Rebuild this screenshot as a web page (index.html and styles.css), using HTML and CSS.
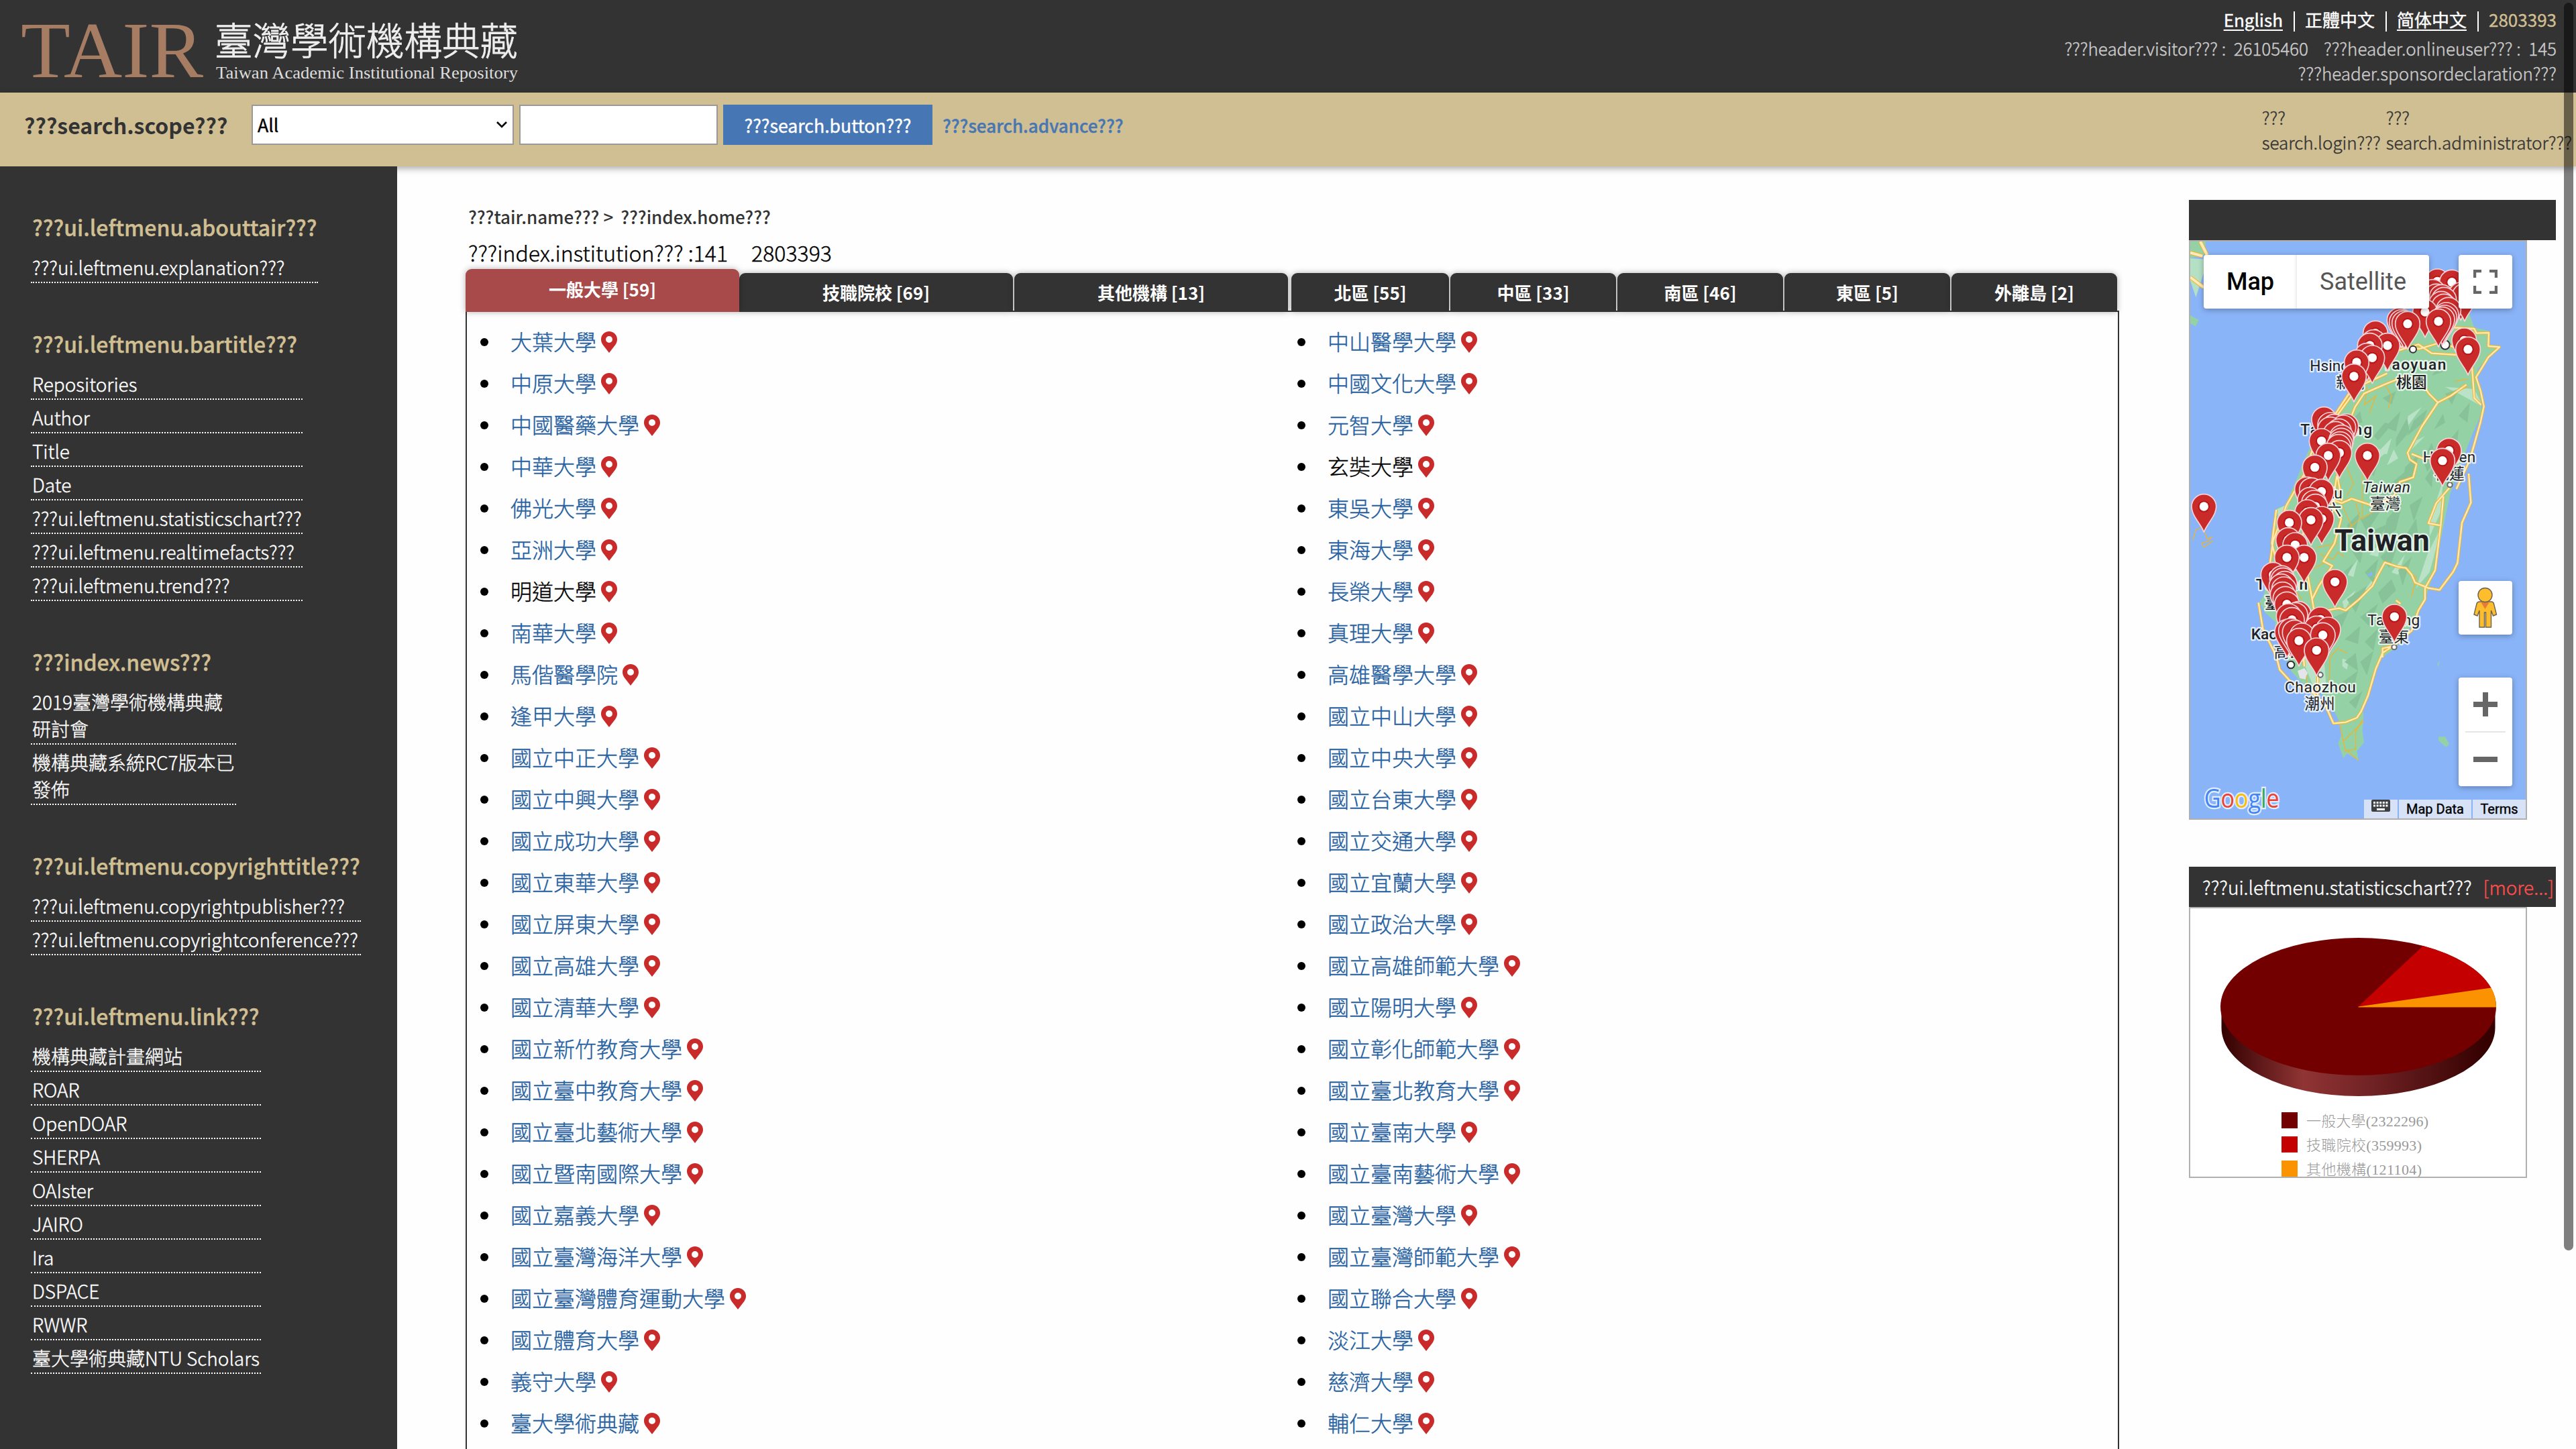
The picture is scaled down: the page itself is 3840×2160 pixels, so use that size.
FILE: index.html
```
<!DOCTYPE html>
<html lang="zh-Hant">
<head>
<meta charset="utf-8">
<title>TAIR</title>
<link rel="stylesheet" href="styles.css">
</head>
<body>
<svg class="defs" width="0" height="0" aria-hidden="true">
  <symbol id="pin" viewBox="0 0 24 32"><path fill="#c92a2a" fill-rule="evenodd" d="M12 0C5.3 0 0 5.3 0 12c0 3 1 5.300 2.700 8L12 32l9.300-12C23 17.300 24 15 24 12 24 5.300 18.700 0 12 0zm0 7a5 5 0 1 1 0 10 5 5 0 0 1 0-10z"/></symbol>
</svg>

<header class="top">
  <svg class="logo" width="800" height="138" viewBox="0 0 800 138">
    <text class="logo-tair" x="31" y="115" textLength="272" lengthAdjust="spacingAndGlyphs">TAIR</text>
    <text class="logo-zh" x="320" y="82" textLength="452" lengthAdjust="spacingAndGlyphs">臺灣學術機構典藏</text>
    <text class="logo-en" x="322" y="117" textLength="450" lengthAdjust="spacingAndGlyphs">Taiwan Academic Institutional Repository</text>
  </svg>
  <div class="top-info">
    <div class="langs"><a class="u">English</a><i></i><span>正體中文</span><i></i><a class="u">简体中文</a><i></i><b>2803393</b></div>
    <div class="counts"><span>???header.visitor??? :&nbsp; 26105460</span><span>???header.onlineuser??? :&nbsp; 145</span></div>
    <div class="counts"><span>???header.sponsordeclaration???</span></div>
  </div>
</header>

<div class="search">
  <span class="scope">???search.scope???</span>
  <div class="select">All<svg width="18" height="12" viewBox="0 0 18 12"><path d="M2 2l7 7 7-7" fill="none" stroke="#000" stroke-width="2.600"/></svg></div>
  <div class="field"></div>
  <div class="button">???search.button???</div>
  <a class="advance">???search.advance???</a>
  <div class="accounts"><span>???<br>search.login???</span><span>???<br>search.administrator???</span></div>
</div>

<div class="page">
<aside class="side">
  <section><h2>???ui.leftmenu.abouttair???</h2><ul><li>???ui.leftmenu.explanation???</li></ul></section>
  <section><h2>???ui.leftmenu.bartitle???</h2><ul class="w-bar"><li>Repositories</li><li>Author</li><li>Title</li><li>Date</li><li>???ui.leftmenu.statisticschart???</li><li>???ui.leftmenu.realtimefacts???</li><li>???ui.leftmenu.trend???</li></ul></section>
  <section><h2>???index.news???</h2><ul class="w-news"><li>2019臺灣學術機構典藏<br>研討會</li><li>機構典藏系統RC7版本已<br>發佈</li></ul></section>
  <section><h2>???ui.leftmenu.copyrighttitle???</h2><ul class="w-copy"><li>???ui.leftmenu.copyrightpublisher???</li><li>???ui.leftmenu.copyrightconference???</li></ul></section>
  <section><h2>???ui.leftmenu.link???</h2><ul class="w-link"><li>機構典藏計畫網站</li><li>ROAR</li><li>OpenDOAR</li><li>SHERPA</li><li>OAIster</li><li>JAIRO</li><li>Ira</li><li>DSPACE</li><li>RWWR</li><li>臺大學術典藏NTU Scholars</li></ul></section>
</aside>

<main class="main">
  <div class="crumb"><span>???tair.name???</span><span>&gt;</span><span>???index.home???</span></div>
  <div class="total"><span>???index.institution??? :141</span><span>2803393</span></div>
  <nav class="tabs">
    <div class="tab t1 active">一般大學 [59]</div><div class="tab t1">技職院校 [69]</div><div class="tab t1 g2">其他機構 [13]</div>
    <div class="tab t2">北區 [55]</div><div class="tab t3">中區 [33]</div><div class="tab t3">南區 [46]</div><div class="tab t3">東區 [5]</div><div class="tab t3">外離島 [2]</div>
  </nav>
  <div class="list">
    <ul>
      <li><a>大葉大學</a><svg><use href="#pin"/></svg></li>
      <li><a>中原大學</a><svg><use href="#pin"/></svg></li>
      <li><a>中國醫藥大學</a><svg><use href="#pin"/></svg></li>
      <li><a>中華大學</a><svg><use href="#pin"/></svg></li>
      <li><a>佛光大學</a><svg><use href="#pin"/></svg></li>
      <li><a>亞洲大學</a><svg><use href="#pin"/></svg></li>
      <li><a class="k">明道大學</a><svg><use href="#pin"/></svg></li>
      <li><a>南華大學</a><svg><use href="#pin"/></svg></li>
      <li><a>馬偕醫學院</a><svg><use href="#pin"/></svg></li>
      <li><a>逢甲大學</a><svg><use href="#pin"/></svg></li>
      <li><a>國立中正大學</a><svg><use href="#pin"/></svg></li>
      <li><a>國立中興大學</a><svg><use href="#pin"/></svg></li>
      <li><a>國立成功大學</a><svg><use href="#pin"/></svg></li>
      <li><a>國立東華大學</a><svg><use href="#pin"/></svg></li>
      <li><a>國立屏東大學</a><svg><use href="#pin"/></svg></li>
      <li><a>國立高雄大學</a><svg><use href="#pin"/></svg></li>
      <li><a>國立清華大學</a><svg><use href="#pin"/></svg></li>
      <li><a>國立新竹教育大學</a><svg><use href="#pin"/></svg></li>
      <li><a>國立臺中教育大學</a><svg><use href="#pin"/></svg></li>
      <li><a>國立臺北藝術大學</a><svg><use href="#pin"/></svg></li>
      <li><a>國立暨南國際大學</a><svg><use href="#pin"/></svg></li>
      <li><a>國立嘉義大學</a><svg><use href="#pin"/></svg></li>
      <li><a>國立臺灣海洋大學</a><svg><use href="#pin"/></svg></li>
      <li><a>國立臺灣體育運動大學</a><svg><use href="#pin"/></svg></li>
      <li><a>國立體育大學</a><svg><use href="#pin"/></svg></li>
      <li><a>義守大學</a><svg><use href="#pin"/></svg></li>
      <li><a>臺大學術典藏</a><svg><use href="#pin"/></svg></li>
    </ul>
    <ul>
      <li><a>中山醫學大學</a><svg><use href="#pin"/></svg></li>
      <li><a>中國文化大學</a><svg><use href="#pin"/></svg></li>
      <li><a>元智大學</a><svg><use href="#pin"/></svg></li>
      <li><a class="k">玄奘大學</a><svg><use href="#pin"/></svg></li>
      <li><a>東吳大學</a><svg><use href="#pin"/></svg></li>
      <li><a>東海大學</a><svg><use href="#pin"/></svg></li>
      <li><a>長榮大學</a><svg><use href="#pin"/></svg></li>
      <li><a>真理大學</a><svg><use href="#pin"/></svg></li>
      <li><a>高雄醫學大學</a><svg><use href="#pin"/></svg></li>
      <li><a>國立中山大學</a><svg><use href="#pin"/></svg></li>
      <li><a>國立中央大學</a><svg><use href="#pin"/></svg></li>
      <li><a>國立台東大學</a><svg><use href="#pin"/></svg></li>
      <li><a>國立交通大學</a><svg><use href="#pin"/></svg></li>
      <li><a>國立宜蘭大學</a><svg><use href="#pin"/></svg></li>
      <li><a>國立政治大學</a><svg><use href="#pin"/></svg></li>
      <li><a>國立高雄師範大學</a><svg><use href="#pin"/></svg></li>
      <li><a>國立陽明大學</a><svg><use href="#pin"/></svg></li>
      <li><a>國立彰化師範大學</a><svg><use href="#pin"/></svg></li>
      <li><a>國立臺北教育大學</a><svg><use href="#pin"/></svg></li>
      <li><a>國立臺南大學</a><svg><use href="#pin"/></svg></li>
      <li><a>國立臺南藝術大學</a><svg><use href="#pin"/></svg></li>
      <li><a>國立臺灣大學</a><svg><use href="#pin"/></svg></li>
      <li><a>國立臺灣師範大學</a><svg><use href="#pin"/></svg></li>
      <li><a>國立聯合大學</a><svg><use href="#pin"/></svg></li>
      <li><a>淡江大學</a><svg><use href="#pin"/></svg></li>
      <li><a>慈濟大學</a><svg><use href="#pin"/></svg></li>
      <li><a>輔仁大學</a><svg><use href="#pin"/></svg></li>
    </ul>
  </div>
</main>

<div class="right">
  <div class="bar"></div>
  <div class="map">
    <svg class="canvas" width="500" height="860" viewBox="0 0 1500 2580">
      <defs>
        <g id="mk"><path d="M0 116C-8 84-55 44-55 0a55 55 0 0 1 110 0C55 44 8 84 0 116z" fill="#c92a2a" stroke="#f6d3d8" stroke-width="5"/><circle r="26" fill="#bb1216"/><circle r="20" fill="#fff"/></g>
        <clipPath id="landclip"><path d="M1155 180L1205 200 1270 385 1335 400 1340 465 1385 470 1335 520 1285 570 1285 640 1300 695 1303 760 1285 810 1262 860 1235 930 1185 1060 1162 1130 1135 1260 1090 1480 1050 1600 1020 1650 975 1740 915 1820 860 1860 830 1920 805 2000 772 2090 775 2130 770 2190 777 2240 745 2280 753 2322 702 2290 685 2310 661 2245 675 2210 665 2145 635 2080 585 2020 495 1970 450 1920 435 1870 380 1760 380 1700 335 1660 310 1610 325 1590 345 1520 365 1440 365 1360 370 1310 385 1195 425 1180 485 1040 500 1000 545 900 655 760 735 680 775 520 885 450 975 360 1085 290z"/></clipPath>
      </defs>
      <rect width="1509" height="2580" fill="#8ab4f8"/>
      <g fill="#94d2a5">
        <path d="M0 0H70L60 60 0 75z"/><path d="M0 75l70 5-10 60-35 110-25-75z" fill="#b4e0c4"/><path d="M0 330l38 20-14 30-24-15z"/>
        <path d="M1105 1890l10-15-5 28z"/><path d="M1110 2215h30l18 32-14 14-34-30z"/>
      </g>
      <g fill="none" stroke="#f5b429" stroke-width="18"><path d="M45 0l30 60M0 50l55 15M0 160l60 45"/><g stroke="#ffeab8" stroke-width="12"><path d="M45 0l30 60M0 50l55 15M0 160l60 45"/></g></g>
      <g clip-path="url(#landclip)">
        <rect x="250" y="150" width="1200" height="2250" fill="#94d2a5"/>
        <g fill="#b9e2c6">
          <path d="M1200 680l-60-30 130 10 40 80zM1070 1250l60-180-10 140-50 110zM1060 1400l70-140-60 220-60 70zM500 1010l120-60-20 100zM385 1200l60-30-40 90zM470 1790l120-20 20 240-60-20zM560 600l160 80-80 100z"/>
          <path d="M975 780l60-40-80 110zM1010 890l40-20-60 60zM880 1000l30-70 20 40zM820 920l60 20-70 60zM800 1400l50-50-10 60zM700 1490l50-70-20 80zM780 1560l80-110-50 100zM680 1610l60-50-50 90zM900 1480l60-80-30 90zM830 950l70-70-20 70zM680 1865l30 10-10 40-20-15z"/>
        </g>
        <g fill="#88c298">
          <path d="M1000 800l60-50-20 60-70 60zM920 880l50-90 10 60-60 70zM820 870l50-60 30 10-60 70zM1090 840l40-70 10 40zM870 830l70-70-20 90zM1040 980l40-80 20 70-40 60zM960 1010l60-60-20 110-50 30zM900 1080l60-50 20 60-70 50zM780 1010l60-20-20 60zM1050 1060l40-60-10 100zM830 1140l80-30-60 80zM700 1270l60-60-30 120zM760 1240l100-50-70 110zM880 1240l70-80-30 130-60 40zM980 1180l60-40-40 110zM800 1300l90-40-70 90zM960 1320l50-80 10 80zM720 1380l60-30-20 90zM850 1410l90-80-50 130zM780 1480l60-60-20 110zM930 1470l60-60-40 130zM660 1500l70-60-60 120zM700 1600l90-60-50 120zM840 1570l60-60 20 50-60 60zM620 1690l90-40-40 90zM760 1680l80-60-40 100zM880 1650l60-40-30 100zM690 1780l70-60-10 80zM780 1790l60-60-20 100zM690 1880l50-40 10 80zM760 1880l60-50-30 110zM680 1970l70-50-20 80zM710 2060l60-50-30 80zM940 640l40-30 10 40zM1080 600l40-60 20 40zM1140 680l60-20-30 70zM1200 780l50-60-10 90zM1150 900l50-60-10 100zM860 700l60-30-20 60zM700 820l60-60 10 50z"/>
        </g>
      </g>
      <path d="M790 1492l22-16 4 12-14 12z" fill="#8ab4f8"/>
      <path d="M480 1920l30-12 15 20-10 30-25-5z" fill="#e4e4ea"/>
      <g fill="none" stroke="#e9b43a" stroke-width="4">
        <path d="M12 1335l12-45 35-15M65 1300l10 30 20-8-14 18-30 10 10 18 40-30M790 650l-10 80 50-40-30 80M870 640l30 50-15 60M700 1010l30 70-30 60M740 1170l20 70-60 50M560 1370l100-20M580 1400l60 20 20-30 30 20M680 1180l40 90-20 50M970 1480l40 20-20 90M650 1320l30-80-50-60M500 1600l-40-50 60-30M610 1430l-70 40M620 1990l5-130 35-40 40 20M665 2145l20 90 90-90M690 2280l50-10 0-80 30-50M682 2220l10 50 60 50M520 1940v80"/>
        <path d="M1180 625l60-10M1150 690l90-40M770 1040v200l60-40"/>
      </g>
      <g id="roads" class="roads">
        <path d="M1180 385l90 5 10 20 55-2-2 60 50 4-50 45-55 90 20 60 15 70-15 70-28 100-20 70-60 130M1260 560l10 140 30 30M1235 640l-70 50-58 30-70 105-65 120 10 30 30 20-15 60-60 20-25 60-40 25-60 20-90-30-45 20-80-30-50-60M1107 720l-40-40-20-30-80-50-100 40-90 40-40 60-60 150-20 150 20 120M785 620l90-90 60-60 90 10 100-30 70 30M850 550l-120 100-180 270-40 120-80 140-60 160-20 150 50 100M880 590l-130 60-160 220M1240 510l-160-10-60-40-130 40-120 120M655 1050l-20 130 40 60-30 110-50 80 40 20-60 90-30 60 10 60 110-20 30 10 60-50 60-60 25-50 30-55 60 20 35 5 25 30 15 35 60 25 50 8 60-80 20-40 20-180 40-90-10-130M1132 1140l-12 130-55-10 35-90 60-70M1120 1270l-25 200-45 80 0 50-30 50-30 90-70 60-60 40-30 70-35 120-30 70-20 30-50 20-55 5-35-80-60-60-90-40-55-60-15-60-60-120-20-120M940 1620l-20-15M860 1860v-40l60-15M385 1200l-20 150 20 80M990 950l50 20 80-5M570 1880v150M540 1690l-40 90 10 120"/>
        <path d="M575 1120h60v110M525 1240l-40 130 40 120 20 110"/>
      </g>
      <use href="#roads" class="roads-fill"/>
      <g fill="#fff" stroke="#333" stroke-width="6"><circle cx="996" cy="482" r="15"/><circle cx="1140" cy="462" r="20"/><circle cx="1161" cy="1088" r="11" stroke="#666"/><circle cx="912" cy="1814" r="11" stroke="#666"/><circle cx="450" cy="1893" r="16"/><circle cx="582" cy="1938" r="11" stroke="#666"/></g>
      <g class="lab">
        <text x="535" y="580">Hsinchu</text><text x="652" y="655">新竹</text>
        <text x="860" y="572" class="m" textLength="284">Taoyuan</text><text x="922" y="653" class="m">桃園</text>
        <text x="493" y="865" class="m" textLength="320">Taichung</text>
        <text x="770" y="1123" class="it" textLength="214">Taiwan</text><text x="804" y="1198">臺灣</text>
        <text x="1040" y="987" textLength="236">Hualien</text><text x="1090" y="1062">花蓮</text>
        <text x="510" y="1150" textLength="170">Douliu</text><text x="540" y="1225">斗六</text>
        <text x="645" y="1383" class="big" textLength="425" lengthAdjust="spacingAndGlyphs">Taiwan</text>
        <text x="293" y="1558" class="m" textLength="232">Tainan</text><text x="333" y="1640" class="m">臺南</text>
        <text x="272" y="1778" class="m">Kaohsiung</text><text x="374" y="1860">高雄</text>
        <text x="793" y="1715" textLength="234">Taitung</text><text x="842" y="1790">臺東</text>
        <text x="423" y="2017" textLength="317">Chaozhou</text><text x="511" y="2092">潮州</text>
      </g>
      <g transform="translate(285,120)">
        <use href="#mk" x="820" y="58"/><use href="#mk" x="925" y="110"/><use href="#mk" x="885" y="62"/><use href="#mk" x="800" y="105"/><use href="#mk" x="815" y="125"/><use href="#mk" x="840" y="128"/><use href="#mk" x="925" y="118"/><use href="#mk" x="942" y="122"/><use href="#mk" x="850" y="140"/><use href="#mk" x="838" y="158"/><use href="#mk" x="850" y="170"/><use href="#mk" x="870" y="185"/><use href="#mk" x="765" y="195"/><use href="#mk" x="860" y="208"/><use href="#mk" x="852" y="220"/><use href="#mk" x="842" y="228"/><use href="#mk" x="650" y="232"/><use href="#mk" x="660" y="240"/><use href="#mk" x="672" y="245"/><use href="#mk" x="687" y="248"/><use href="#mk" x="825" y="237"/>
        <use href="#mk" x="543" y="290"/><use href="#mk" x="535" y="330"/><use href="#mk" x="597" y="345"/><use href="#mk" x="518" y="345"/><use href="#mk" x="505" y="390"/><use href="#mk" x="529" y="400"/><use href="#mk" x="459" y="420"/><use href="#mk" x="447" y="483"/><use href="#mk" x="940" y="322"/><use href="#mk" x="957" y="362"/>
        <use href="#mk" x="313" y="675"/><use href="#mk" x="340" y="700"/><use href="#mk" x="358" y="708"/><use href="#mk" x="412" y="706"/><use href="#mk" x="400" y="712"/><use href="#mk" x="340" y="720"/><use href="#mk" x="380" y="728"/><use href="#mk" x="365" y="740"/><use href="#mk" x="392" y="756"/><use href="#mk" x="302" y="772"/><use href="#mk" x="390" y="770"/><use href="#mk" x="385" y="786"/><use href="#mk" x="378" y="798"/><use href="#mk" x="382" y="825"/><use href="#mk" x="332" y="837"/><use href="#mk" x="507" y="837"/><use href="#mk" x="272" y="890"/><use href="#mk" x="872" y="815"/><use href="#mk" x="843" y="860"/>
        <use href="#mk" x="237" y="988"/><use href="#mk" x="258" y="992"/><use href="#mk" x="302" y="998"/><use href="#mk" x="250" y="1035"/><use href="#mk" x="268" y="1048"/><use href="#mk" x="275" y="1065"/><use href="#mk" x="238" y="1090"/><use href="#mk" x="303" y="1120"/><use href="#mk" x="255" y="1125"/><use href="#mk" x="158" y="1137"/><use href="#mk" x="-224" y="1065"/>
      </g>
      <g transform="translate(285,1260)">
        <use href="#mk" x="153" y="75"/><use href="#mk" x="184" y="97"/><use href="#mk" x="224" y="153"/><use href="#mk" x="147" y="153"/><use href="#mk" x="86" y="230"/><use href="#mk" x="125" y="245"/><use href="#mk" x="130" y="255"/><use href="#mk" x="138" y="270"/><use href="#mk" x="122" y="282"/><use href="#mk" x="134" y="295"/><use href="#mk" x="128" y="318"/><use href="#mk" x="140" y="338"/><use href="#mk" x="147" y="362"/><use href="#mk" x="362" y="262"/><use href="#mk" x="200" y="405"/><use href="#mk" x="185" y="410"/><use href="#mk" x="155" y="415"/><use href="#mk" x="170" y="432"/><use href="#mk" x="297" y="430"/><use href="#mk" x="280" y="470"/><use href="#mk" x="332" y="475"/><use href="#mk" x="148" y="485"/><use href="#mk" x="165" y="480"/><use href="#mk" x="182" y="488"/><use href="#mk" x="215" y="502"/><use href="#mk" x="308" y="500"/><use href="#mk" x="201" y="525"/><use href="#mk" x="280" y="568"/><use href="#mk" x="628" y="418"/>
      </g>
      <text class="google" x="62" y="2531" textLength="336" lengthAdjust="spacingAndGlyphs"><tspan fill="#4285f4">G</tspan><tspan fill="#ea4335">o</tspan><tspan fill="#fbbc04">o</tspan><tspan fill="#4285f4">g</tspan><tspan fill="#34a853">l</tspan><tspan fill="#ea4335">e</tspan></text>
    </svg>
    <div class="ctl types"><b>Map</b><span>Satellite</span></div>
    <div class="ctl full"><svg width="36" height="36" viewBox="0 0 36 36"><path d="M2 12V2h10M24 2h10v10M34 24v10H24M12 34H2V24" fill="none" stroke="#666" stroke-width="4.400"/></svg></div>
    <div class="ctl man"><svg width="36" height="62" viewBox="0 0 36 62"><path d="M9 22h18c2 0 3 1 3.500 3l4 16-5 2-3-8V60h-8V38h-2v22H9V35l-3 8-5-2 4-16c.5-2 2-3 4-3z" fill="#fdbd2c" stroke="#6b6250" stroke-width="1.400"/><path d="M11 22h13l-6.500 11z" fill="#e37d35"/><circle cx="17.500" cy="12" r="10.500" fill="#fdbd2c" stroke="#6b6250" stroke-width="1.400"/></svg></div>
    <div class="ctl zoom"><svg width="80" height="162" viewBox="0 0 80 162"><path d="M22 40h36M40 22v36M22 122h36" stroke="#666" stroke-width="8"/><path d="M10 81h60" stroke="#e6e6e6" stroke-width="2"/></svg></div>
    <div class="legal"><span class="kb"><svg width="28" height="18" viewBox="0 0 28 18"><rect width="28" height="18" rx="2" fill="#3c4043"/><path d="M3 4.500h22M3 9h22" stroke="#fff" stroke-width="3" stroke-dasharray="3 1.600"/><path d="M8 14.500h12" stroke="#fff" stroke-width="3"/></svg></span><span class="md">Map Data</span><span class="tm">Terms</span></div>
  </div>
  <div class="bar stat"><span>???ui.leftmenu.statisticschart???</span><a>[more...]</a></div>
  <div class="chart">
    <svg width="500" height="400" viewBox="0 0 500 400">
      <defs><linearGradient id="rim" x1="0" x2="1"><stop offset="0" stop-color="#300"/><stop offset=".3" stop-color="#903434"/><stop offset=".55" stop-color="#702224"/><stop offset=".97" stop-color="#340000"/></linearGradient></defs>
      <path d="M46.500 147V178A204 102 0 0 0 454.500 178V147z" fill="url(#rim)"/>
      <ellipse cx="250.500" cy="146.500" rx="205.500" ry="102.500" fill="#730000"/>
      <path d="M250.500 146.500L347 56A205.500 102.500 0 0 1 448.500 119z" fill="#c40000"/>
      <path d="M250.500 146.500L448.500 118.500Q456 131 456 147.500H250.500z" fill="#fb9200"/>
      <g class="leg"><path d="M136 304h24v24h-24z" fill="#730000"/><path d="M136 340h24v24h-24z" fill="#c40000"/><path d="M136 376h24v24h-24z" fill="#fb9200"/>
      <text x="173" y="325" textLength="182">一般大學(2322296)</text><text x="173" y="361" textLength="172">技職院校(359993)</text><text x="173" y="397" textLength="172">其他機構(121104)</text></g>
    </svg>
  </div>
</div>
</div>
<div class="scrollbar"></div>
</body>
</html>
```
FILE: styles.css
```
*{box-sizing:border-box}
body{margin:0;width:3840px;height:2160px;overflow:hidden;position:relative;background:#fefefe;color:#333;font-family:"Noto Sans CJK TC","Noto Sans",sans-serif;font-size:28px;font-weight:300;-webkit-text-stroke:.4px}
svg{-webkit-text-stroke:0}
ul{list-style:none;margin:0;padding:0}
h2{margin:0}
.defs{position:absolute}

.top{height:138px;background:#333;display:flex;justify-content:space-between;padding-right:29px}
.logo-tair{font:118px "Liberation Serif",serif;fill:#a67c62}
.logo-zh{font:300 57px "Noto Sans CJK TC",sans-serif;fill:#eee;stroke:#eee;stroke-width:.8px}
.logo-en{font:26px "Liberation Serif",serif;fill:#ddd}
.top-info{padding-top:4px;font-size:26px;color:#ccc}
.langs{display:flex;justify-content:flex-end;align-items:center;height:49px;line-height:49px;font-weight:400;color:#fff}
.langs i{width:2px;height:30px;background:#fff;margin:6px 15px 0 16px}
.langs b{font-weight:400;color:#d0bf92}
.u{text-decoration:underline;text-decoration-thickness:2px;text-underline-offset:4px}
.counts{display:flex;justify-content:flex-end;gap:23px;height:37px;line-height:37px}

.search{height:110px;background:#d0bf92;display:flex;align-items:flex-start;padding:18px 0 0 36px;box-shadow:0 3px 10px rgba(0,0,0,.35);position:relative;z-index:1}
.scope{font-weight:700;font-size:32px;line-height:60px;width:339px;color:#333;-webkit-text-stroke:0}
.select{width:391px;height:60px;border:2px solid #999;background:#fff;color:#000;font-weight:400;font-size:26.670px;line-height:58px;padding:0 7px;display:flex;justify-content:space-between;align-items:center}
.field{width:296px;height:60px;border:2px solid #999;background:#fff;margin:0 8px}
.button{width:312px;height:60px;background:#4776b4;color:#fff;font-weight:400;font-size:26.670px;line-height:61px;text-align:center}
.advance{font-weight:500;font-size:26px;line-height:62px;color:#4776b4;margin-left:15px}
.accounts{margin-left:auto;display:flex;gap:8px;font-size:26px;line-height:37px;padding-right:6px;color:#333}

.page{display:flex;height:1912px}
.side{width:592px;background:#333;padding:43px 0 0 46px;position:relative;z-index:2;color:#fff}
.side section{padding-top:23px}
.side h2{font-weight:500;font-size:32px;line-height:48px;height:58px;padding-left:2px;color:#d0bf92}
.side ul{width:428px;margin-bottom:43px}
.side .w-bar{width:405px}
.side .w-news{width:306px}
.side .w-copy{width:492px}
.side .w-link{width:343px}
.side li{font-size:28px;line-height:40px;padding:6px 0 2px 2px;border-bottom:2px dotted #fff;white-space:nowrap}

.main{width:2465px;margin-left:102px;padding-top:50px;display:flex;flex-direction:column}
.crumb{height:52px;line-height:50px;font-weight:500;font-size:26px;padding-left:4px;display:flex;gap:6px;-webkit-text-stroke:0}
.crumb span:last-child{margin-left:5px}
.total{height:51px;line-height:52px;font-size:32px;color:#000;padding-left:4px;display:flex;gap:35px}
.tabs{display:flex;align-items:flex-end;height:64px;flex:none;-webkit-text-stroke:0}
.tab{height:58px;line-height:58px;background:#333;color:#fff;font-weight:700;font-size:26px;text-align:center;border-radius:9px 9px 0 0;box-shadow:0 0 10px rgba(0,0,0,.3);margin-right:2px}
.t1{width:408px}
.active{height:64px;line-height:60px;background:#a94a4a;margin-right:0;position:relative;z-index:1}
.g2{margin-right:5px}
.t2{width:235px}
.t3{width:247px}
.list{flex:1;border:2px solid #333;border-bottom:0;margin-top:-2px;display:flex;padding-top:14px}
.list ul{width:1218px;padding-left:20px}
.list li{height:62px;display:flex;align-items:center;font-size:32px}
.list li::before{content:"";width:12px;height:12px;border-radius:50%;background:#000;margin-right:33px}
.list a{color:#2460a0;line-height:40px;padding-bottom:4px}
.list .k{color:#000}
.list svg{width:24px;height:32px;margin-left:7px}

.right{margin-left:104px;padding-top:50px;width:547px;flex:none}
.bar{height:60px;background:#333;color:#fff;line-height:60px;padding:0 3px 0 20px;display:flex;justify-content:space-between}
.stat{margin-top:70px}
.bar a{color:#ff4d4d}
.map{position:relative;width:504px;height:864px;border:2px solid #b0b0b0;overflow:hidden}
.canvas{display:block}
.roads{fill:none;stroke:var(--road,#f5b429);stroke-width:var(--road-width,13px);stroke-linejoin:round}
.roads-fill{--road:#ffeab8;--road-width:7px}
.lab{font:400 68px Roboto,"Noto Sans CJK TC",sans-serif;fill:#202124;stroke:rgba(255,255,255,.75);stroke-width:14px;paint-order:stroke;stroke-linejoin:round}
.m{font-weight:500}
.it{font-style:italic}
.big{font-size:132px;font-weight:700}
.google{font:500 116px "Open Sans",sans-serif;stroke:rgba(255,255,255,.75);stroke-width:14px;paint-order:stroke}
.ctl{position:absolute;background:#fff;border-radius:4px;box-shadow:0 2px 8px rgba(0,0,0,.3);display:flex;align-items:center;justify-content:center;-webkit-text-stroke:0}
.types{left:20px;top:20px;width:336px;height:80px;font:400 36px Roboto,sans-serif;color:#565656}
.types b{width:139px;text-align:center;font-weight:500;color:#000;line-height:80px;box-shadow:inset -5px 0 5px -4px rgba(0,0,0,.12)}
.types span{flex:1;text-align:center}
.full{left:400px;top:20px;width:80px;height:80px}
.man{left:400px;top:506px;width:80px;height:80px}
.zoom{left:400px;top:650px;width:80px;height:162px}
.legal{position:absolute;right:0;bottom:0;display:flex;gap:2px;height:28px;font:400 20px/28px Roboto,sans-serif;color:#000}
.legal span{background:#d7e2f6;text-align:center}
.kb{width:50px;line-height:0}
.md{width:108px}
.tm{width:79px}
.chart{width:504px;height:404px;border:2px solid #b0b0b0;background:#fff}
.chart svg{display:block}
.leg text{font:22px "Liberation Serif","Noto Sans CJK TC",serif;font-weight:300;fill:#999}
.scrollbar{position:absolute;right:4px;top:4px;width:14px;height:1860px;border-radius:7px;background:rgba(0,0,0,.5);z-index:5}
```
